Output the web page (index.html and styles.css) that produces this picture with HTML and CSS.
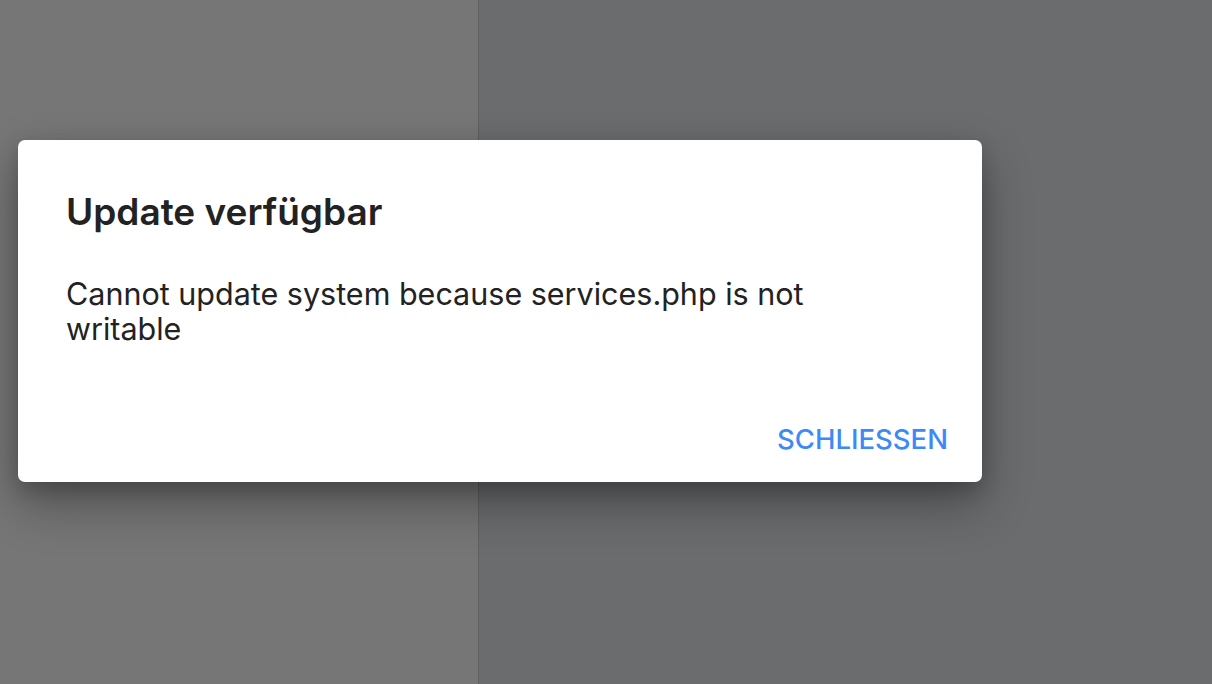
FILE: index.html
```html
<!DOCTYPE html>
<html lang="de">
<head>
<meta charset="utf-8">
<title>Update verfügbar</title>
<link rel="stylesheet" href="styles.css">
</head>
<body>
<div class="app">
  <div class="sidebar"></div>
  <div class="main"></div>
</div>
<div class="dialog" role="dialog">
  <h2 class="dialog-title">Update verfügbar</h2>
  <p class="dialog-text">Cannot update system because services.php is not writable</p>
  <div class="dialog-actions">
    <button class="btn-text">SCHLIESSEN</button>
  </div>
</div>
</body>
</html>
```
FILE: styles.css
```css
html, body {
  margin: 0;
  padding: 0;
  height: 100%;
}
body {
  font-family: Inter, "Helvetica Neue", Arial, sans-serif;
  overflow: hidden;
}
.app {
  display: flex;
  height: 100%;
}
.sidebar {
  width: 478px;
  background: #767676;
  border-right: 1px solid #5f5f5f;
}
.main {
  flex: 1;
  background: #6b6c6e;
}
.dialog {
  position: absolute;
  left: 18px;
  top: 140px;
  width: 964px;
  height: 342px;
  box-sizing: border-box;
  background: #fff;
  border-radius: 7px;
  box-shadow: 0 22px 50px rgba(0,0,0,0.32), 0 8px 20px rgba(0,0,0,0.18);
  padding: 50px 34px 20px 48px;
  display: flex;
  flex-direction: column;
}
.dialog-title {
  margin: 0;
  font-size: 37px;
  font-weight: 600;
  color: #222;
  line-height: 44px;
}
.dialog-text {
  margin: 42px 0 0;
  font-size: 30.5px;
  line-height: 35px;
  color: #222;
  max-width: 800px;
}
.dialog-actions {
  margin-top: auto;
  display: flex;
  justify-content: flex-end;
}
.btn-text {
  background: none;
  border: none;
  font-family: inherit;
  font-size: 27.5px;
  line-height: 34px;
  font-weight: 500;
  color: #3d8af7;
  padding: 6px 0;
  cursor: pointer;
}
```
